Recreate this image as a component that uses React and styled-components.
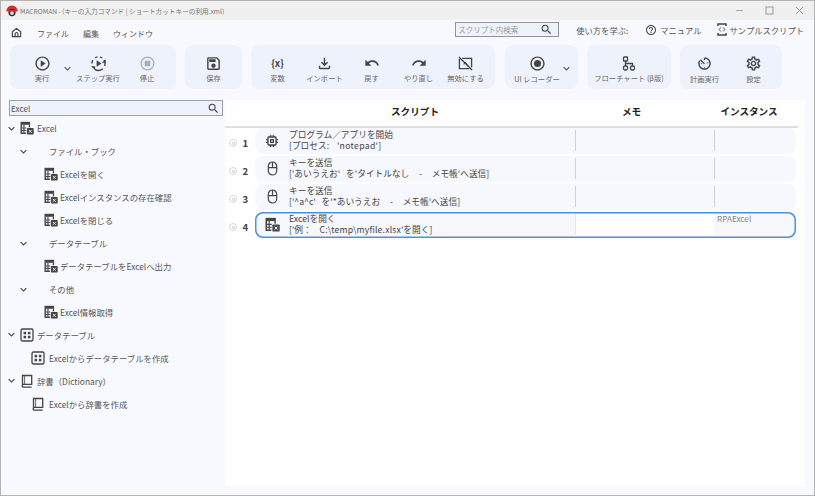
import React from "react"
import styled, { createGlobalStyle } from "styled-components"
import {
  MdOutlinePlayCircle,
  MdOutlineSave,
  MdOutlineFileDownload,
  MdUndo,
  MdRedo,
  MdOutlineRadioButtonChecked,
  MdOutlineSettings,
  MdOutlineMemory,
  MdOutlineHelpOutline,
  MdKeyboardArrowDown,
  MdSearch,
} from "react-icons/md"

const Global = createGlobalStyle`
  html, body { margin: 0; padding: 0; }
  body { font-family: "Noto Sans CJK JP", "Noto Sans", sans-serif; background: #f8f9fe; }
`

const Win = styled.div`
  width: 815px;
  height: 496px;
  box-sizing: border-box;
  border: 1px solid #b4b4b4;
  background: #f8f9fe;
  display: flex;
  flex-direction: column;
  overflow: hidden;
`

const TitleBar = styled.div`
  height: 19px;
  flex: none;
  background: #f0f0f0;
  display: flex;
  align-items: center;
  padding-left: 5px;
`
const Title = styled.span`
  font-size: 6.65px;
  color: #777;
  margin-left: 2px;
  white-space: pre;
`
const WinButtons = styled.div`
  margin-left: auto;
  display: flex;
`
const WinButton = styled.div`
  width: 30px;
  height: 19px;
  display: flex;
  align-items: center;
  justify-content: center;
`

const MenuBar = styled.div`
  height: 25px;
  flex: none;
  display: flex;
  align-items: center;
  padding-left: 10px;
`
const MenuItem = styled.span`
  font-size: 8px;
  color: #555;
  margin-left: ${(p) => p.$left}px;
  padding-top: 1px;
`
const SearchTop = styled.div`
  width: 104px;
  height: 15px;
  box-sizing: border-box;
  margin-left: auto;
  border: 1px solid #8f949c;
  background: #eef2fd;
  display: flex;
  align-items: center;
  justify-content: space-between;
  padding: 0 5px 0 2px;
  font-size: 7.5px;
  color: #9a9a9a;
  position: relative;
  top: -3px;
`
const HelpArea = styled.div`
  display: flex;
  align-items: center;
  margin-left: 17px;
  margin-right: 10px;
  position: relative;
  top: -3px;
  font-size: 8.3px;
  color: #555;
  white-space: nowrap;
`
const HelpLink = styled.span`
  display: flex;
  align-items: center;
  gap: 3px;
  margin-left: ${(p) => p.$left}px;
`

const Toolbar = styled.div`
  height: 44px;
  flex: none;
  display: flex;
  padding-left: 9px;
`
const Group = styled.div`
  width: ${(p) => p.$w}px;
  margin-right: ${(p) => p.$mr}px;
  padding-left: ${(p) => p.$pl || 0}px;
  box-sizing: border-box;
  background: #eef2fd;
  border-radius: 8px;
  display: flex;
`
const Tool = styled.div`
  width: ${(p) => p.$w}px;
  display: flex;
  flex-direction: column;
  align-items: center;
  padding-top: 9px;
  color: #444;
`
const ToolIcon = styled.div`
  width: 18px;
  height: 18px;
  display: flex;
  align-items: center;
  justify-content: center;
`
const VarGlyph = styled.span`
  font-size: 9.5px;
  font-weight: 700;
  white-space: nowrap;
`
const ToolLabel = styled.span`
  font-size: 7.3px;
  line-height: 12px;
  margin-top: ${(p) => (p.$low ? 1 : 0)}px;
  color: #666;
  white-space: nowrap;
`
const Drop = styled.div`
  width: 6px;
  margin-left: ${(p) => p.$ml || 0}px;
  display: flex;
  justify-content: center;
  padding-top: 17px;
  color: #555;
`

const Content = styled.div`
  flex: 1;
  min-height: 0;
  display: flex;
  padding-top: 11px;
  padding-bottom: 9px;
`
const Sidebar = styled.div`
  width: 224px;
  flex: none;
  padding-left: 8px;
  box-sizing: border-box;
`
const TreeSearch = styled.div`
  width: 214px;
  height: 16px;
  box-sizing: border-box;
  border: 1px solid #9a9fa6;
  background: #eef2fd;
  display: flex;
  align-items: center;
  justify-content: space-between;
  padding: 0 2px 0 1px;
  font-size: 8.2px;
  color: #555;
  margin-bottom: 1px;
`
const TreeRow = styled.div`
  height: 22.95px;
  margin-left: -8px;
  padding-left: ${(p) => p.$indent}px;
  display: flex;
  align-items: center;
  color: #4a4a4a;
`
const Caret = styled.div`
  width: 8px;
  margin-right: ${(p) => p.$mr || 0}px;
  display: flex;
  justify-content: center;
  color: #444;
`
const TreeLabel = styled.span`
  font-size: 8.4px;
  color: #555;
  margin-left: ${(p) => p.$left}px;
  white-space: nowrap;
`

const Main = styled.div`
  flex: 1;
  margin-right: 9px;
  background: #fff;
  padding-right: 7px;
`
const HeadRow = styled.div`
  height: 28px;
  box-sizing: border-box;
  border-bottom: 2px solid #dfdfdf;
  display: grid;
  grid-template-columns: 30px 320px 139px 84px;
  align-items: center;
  font-size: 9.6px;
  font-weight: 700;
  color: #222;
`
const HeadCell = styled.div`
  text-align: center;
  padding-right: ${(p) => p.$pr || 0}px;
  padding-bottom: 4px;
  white-space: nowrap;
`
const Rows = styled.div`
  display: flex;
  flex-direction: column;
  gap: 2px;
`
const ScriptRow = styled.div`
  display: flex;
  height: 26px;
`
const Gutter = styled.div`
  width: 30px;
  flex: none;
  display: flex;
  align-items: center;
  padding-left: 4px;
  box-sizing: border-box;
  gap: 5.5px;
  padding-top: 4px;
`
const Mark = styled.span`
  width: 8px;
  height: 8px;
  box-sizing: border-box;
  border: 1px solid #d6d6d6;
  border-radius: 50%;
  display: flex;
  align-items: center;
  justify-content: center;
  &::after {
    content: "";
    width: 3px;
    height: 3px;
    background: #e2e2e2;
  }
`
const Num = styled.span`
  font-size: 9.6px;
  font-weight: 700;
  color: #444;
`
const Card = styled.div`
  width: 541px;
  border-radius: 8px;
  background: #f7f8fd;
  display: flex;
  align-items: stretch;
  box-shadow: ${(p) => (p.$active ? "inset 0 0 0 1.5px #4a90e2" : "none")};
`
const ScriptCell = styled.div`
  width: 320px;
  flex: none;
  display: flex;
  align-items: center;
`
const CmdIcon = styled.div`
  width: 34px;
  flex: none;
  display: flex;
  justify-content: center;
  padding-bottom: 1px;
  color: #444;
`
const CmdText = styled.div`
  font-size: 8.7px;
  line-height: 11px;
  color: #444;
  white-space: pre;
  padding-bottom: 3px;
`
const Wide = styled.span`
  letter-spacing: ${(p) => p.$ls}px;
`
const MemoCell = styled.div`
  width: 139px;
  flex: none;
  margin: 2px 0 3px;
  border-left: 1.5px solid ${(p) => (p.$active ? "#e6e6e6" : "#d0d0d0")};
  box-sizing: border-box;
  background: ${(p) => (p.$active ? "#fff" : "transparent")};
`
const InstanceCell = styled.div`
  flex: 1;
  margin: 2px 0 3px;
  border-left: 1.5px solid ${(p) => (p.$active ? "transparent" : "#d0d0d0")};
  padding-left: 2px;
  font-size: 8.2px;
  line-height: 8.5px;
  color: #888;
`

const Logo = () => (
  <svg width="12" height="12" viewBox="0 0 12 12">
    <path d="M0.5 6a5.5 5.5 0 0 1 11 0z" fill="#d32b2b" />
    <circle cx="6" cy="7.6" r="3.6" fill="#333" />
    <circle cx="6" cy="8" r="1.9" fill="#ddd" />
    <rect x="0.5" y="5" width="11" height="1.4" fill="#d32b2b" />
  </svg>
)

const HomeIcon = () => (
  <svg width="11" height="11" viewBox="0 0 12 12" fill="none" stroke="#444" strokeWidth="1.3">
    <path d="M1.5 5.2 6 1.5l4.5 3.7V10.5H1.5z" strokeLinejoin="round" />
    <path d="M4.5 10.5V7.5a1.5 1.5 0 0 1 3 0v3" />
  </svg>
)

const StepIcon = () => (
  <svg width="17" height="17" viewBox="0 0 18 18" fill="none" stroke="#444" strokeWidth="1.5">
    <path d="M2 9a7 7 0 0 1 1-3.5" />
    <path d="M5.5 3A7 7 0 0 1 8 2" />
    <path d="M10.5 2.2A7 7 0 0 1 13 3.2" />
    <path d="M14.8 5.5A7 7 0 0 1 16 9a7 7 0 0 1-.6 2.5" />
    <path d="M5 15.2A7 7 0 0 0 13.5 14.5" />
    <path d="M7 5.6 12.2 9 7 12.4z" fill="#444" stroke="none" />
    <path d="M1 12h4.4v3.8z" fill="#444" stroke="none" />
    <path d="M16.6 4.4v3.8h-4z" fill="#444" stroke="none" />
  </svg>
)

const StopIcon = () => (
  <svg width="15" height="15" viewBox="0 0 16 16" fill="none">
    <circle cx="8" cy="8" r="6.8" stroke="#a9afb7" strokeWidth="1.3" />
    <rect x="5" y="5" width="6" height="6" rx="0.6" fill="#a9afb7" />
  </svg>
)

const DisableIcon = () => (
  <svg width="15" height="15" viewBox="0 0 16 16" fill="none" stroke="#444" strokeWidth="1.4">
    <path d="M4.5 2.5h10v9.5M12 13.5H1.5V3" />
    <path d="M1 1l14 14" />
    <path d="M6 9l2-2 3 4" strokeWidth="1.1" />
  </svg>
)

const FlowIcon = () => (
  <svg width="14" height="15" viewBox="0 0 14 15" fill="none" stroke="#444" strokeWidth="1.3">
    <rect x="1.5" y="1" width="4" height="4" rx="0.6" />
    <rect x="1.5" y="10" width="4" height="4" rx="1.4" />
    <rect x="8.5" y="10" width="4" height="4" rx="1.4" />
    <path d="M3.5 5v5M3.5 7.5h7V10" />
  </svg>
)

const TimerIcon = () => (
  <svg width="15" height="15" viewBox="0 0 16 16" fill="none" stroke="#444" strokeWidth="1.5">
    <path d="M8 2a6 6 0 1 1-5.2 3" />
    <path d="M8 2.2v2M3.6 4 8 8.4" />
    <path d="M12 6.5 10.8 8M4 8.2h1.2M8 12v1.4" strokeWidth="1" />
  </svg>
)

const SampleIcon = () => (
  <svg width="10" height="13" viewBox="0 0 10 13" fill="none" stroke="#444">
    <path d="M1 3V1h8v2M1 10v2h8v-2" strokeWidth="1.5" />
    <path d="M3.8 4.5 2.2 6.5l1.6 2M6.2 4.5l1.6 2-1.6 2" strokeWidth="0.9" />
  </svg>
)

const ExcelIcon = ({ size = 14 }) => (
  <svg width={size} height={size} viewBox="0 0 14 14">
    <path d="M0.5 0.8h9.6v3H0.5z" fill="#444" />
    <path d="M0.5 3.8h1.4v9.2H0.5zM1.9 11.6h4v1.4h-4z" fill="#444" />
    <path d="M3.4 3.8h1.1v8H3.4z" fill="#444" />
    <path d="M1.9 6.4h4.4v1.1H1.9zM1.9 9h4.4v1.1H1.9z" fill="#444" />
    <path d="M8.8 3.8h1.3v2.6H8.8z" fill="#444" />
    <rect x="6.9" y="7" width="6.8" height="6.6" rx="0.8" fill="#444" />
    <path d="M8.9 8.9l2.8 2.9M11.7 8.9l-2.8 2.9" stroke="#fff" strokeWidth="0.9" />
  </svg>
)

const GridIcon = () => (
  <svg width="14" height="14" viewBox="0 0 14 14">
    <rect x="1" y="1" width="12" height="12" rx="1.4" fill="none" stroke="#444" strokeWidth="1.3" />
    <rect x="3.6" y="3.8" width="2.5" height="2.5" fill="#444" />
    <rect x="7.9" y="3.8" width="2.5" height="2.5" fill="#444" />
    <rect x="3.6" y="7.8" width="2.5" height="2.5" fill="#444" />
    <rect x="7.9" y="7.8" width="2.5" height="2.5" fill="#444" />
  </svg>
)

const BookIcon = () => (
  <svg width="14" height="14" viewBox="0 0 14 14" fill="none" stroke="#444" strokeWidth="1.3">
    <path d="M2.5 11V1.5h9.2v8.8H3.6a1.3 1.3 0 0 0 0 2.9h8.1" />
    <path d="M4.6 1.5v8.8" strokeWidth="0.8" />
  </svg>
)

const MouseIcon = () => (
  <svg width="15" height="15" viewBox="0 0 15 15" fill="none" stroke="#444" strokeWidth="1.2">
    <rect x="3.3" y="1" width="8.4" height="13" rx="4.2" />
    <path d="M3.3 6.6h8.4M7.5 1v5.6" />
  </svg>
)

const Arrow = () => <MdKeyboardArrowDown size={13} style={{ flex: "none" }} />

const Root = ({ icon, label }) => (
  <TreeRow $indent={6}>
    <Caret $mr={5}><Arrow /></Caret>
    {icon}
    <TreeLabel $left={3}>{label}</TreeLabel>
  </TreeRow>
)

const Section = ({ label }) => (
  <TreeRow $indent={18}>
    <Caret><Arrow /></Caret>
    <TreeLabel $left={22}>{label}</TreeLabel>
  </TreeRow>
)

const Leaf = ({ icon, label, indent = 43, left = 2 }) => (
  <TreeRow $indent={indent}>
    {icon}
    <TreeLabel $left={left}>{label}</TreeLabel>
  </TreeRow>
)

const scripts = [
  {
    n: 1,
    icon: <MdOutlineMemory size={16} />,
    a: "プログラム／アプリを開始",
    b: <>[プロセス:    <Wide $ls={0.3}>'notepad'</Wide>]</>,
  },
  {
    n: 2,
    icon: <MouseIcon />,
    a: "キーを送信",
    b: "['あいうえお'   を'タイトルなし     -     メモ帳'へ送信]",
  },
  {
    n: 3,
    icon: <MouseIcon />,
    a: "キーを送信",
    b: "['^a^c'   を'*あいうえお     -     メモ帳'へ送信]",
  },
  {
    n: 4,
    icon: <ExcelIcon size={15} />,
    a: "Excelを開く",
    b: <>['例：    <Wide $ls={0.15}>C:\temp\myfile.xlsx</Wide>'を開く]</>,
    inst: "RPAExcel",
    active: true,
  },
]

export default function App() {
  return (
    <Win>
      <Global />
      <TitleBar>
        <Logo />
        <Title>MACROMAN - (キーの入力コマンド | ショートカットキーの利用.xml)</Title>
        <WinButtons>
          <WinButton>
            <svg width="9" height="9" viewBox="0 0 9 9"><path d="M1 4.5h7" stroke="#aaa" /></svg>
          </WinButton>
          <WinButton>
            <svg width="9" height="9" viewBox="0 0 9 9"><rect x="1" y="1" width="7" height="7" fill="none" stroke="#999" /></svg>
          </WinButton>
          <WinButton>
            <svg width="9" height="9" viewBox="0 0 9 9"><path d="M1 1l7 7M8 1l-7 7" stroke="#999" /></svg>
          </WinButton>
        </WinButtons>
      </TitleBar>

      <MenuBar>
        <HomeIcon />
        <MenuItem $left={15}>ファイル</MenuItem>
        <MenuItem $left={14}>編集</MenuItem>
        <MenuItem $left={14}>ウィンドウ</MenuItem>
        <SearchTop>
          スクリプト内検索
          <MdSearch size={13} color="#444" />
        </SearchTop>
        <HelpArea>
          使い方を学ぶ:
          <HelpLink $left={17}><MdOutlineHelpOutline size={12} color="#444" />マニュアル</HelpLink>
          <HelpLink $left={15}><SampleIcon />サンプルスクリプト</HelpLink>
        </HelpArea>
      </MenuBar>

      <Toolbar>
        <Group $w={166} $mr={9} $pl={10}>
          <Tool $w={44}><ToolIcon><MdOutlinePlayCircle size={17} /></ToolIcon><ToolLabel>実行</ToolLabel></Tool>
          <Drop><Arrow /></Drop>
          <Tool $w={56}><ToolIcon><StepIcon /></ToolIcon><ToolLabel>ステップ実行</ToolLabel></Tool>
          <Tool $w={42}><ToolIcon><StopIcon /></ToolIcon><ToolLabel>停止</ToolLabel></Tool>
        </Group>
        <Group $w={57} $mr={9}>
          <Tool $w={57}><ToolIcon><MdOutlineSave size={17} /></ToolIcon><ToolLabel>保存</ToolLabel></Tool>
        </Group>
        <Group $w={244} $mr={10} $pl={3}>
          <Tool $w={47}><ToolIcon><VarGlyph>{"{x}"}</VarGlyph></ToolIcon><ToolLabel>変数</ToolLabel></Tool>
          <Tool $w={47}><ToolIcon><MdOutlineFileDownload size={17} /></ToolIcon><ToolLabel>インポート</ToolLabel></Tool>
          <Tool $w={47}><ToolIcon><MdUndo size={16} /></ToolIcon><ToolLabel>戻す</ToolLabel></Tool>
          <Tool $w={47}><ToolIcon><MdRedo size={16} /></ToolIcon><ToolLabel>やり直し</ToolLabel></Tool>
          <Tool $w={47}><ToolIcon><DisableIcon /></ToolIcon><ToolLabel>無効にする</ToolLabel></Tool>
        </Group>
        <Group $w={73} $mr={9} $pl={4}>
          <Tool $w={56}><ToolIcon><MdOutlineRadioButtonChecked size={17} /></ToolIcon><ToolLabel $low>UI レコーダー</ToolLabel></Tool>
          <Drop $ml={-2}><Arrow /></Drop>
        </Group>
        <Group $w={84} $mr={9}>
          <Tool $w={84}><ToolIcon><FlowIcon /></ToolIcon><ToolLabel>フローチャート (β版)</ToolLabel></Tool>
        </Group>
        <Group $w={102} $mr={0}>
          <Tool $w={49}><ToolIcon><TimerIcon /></ToolIcon><ToolLabel $low>計画実行</ToolLabel></Tool>
          <Tool $w={49}><ToolIcon><MdOutlineSettings size={17} /></ToolIcon><ToolLabel $low>設定</ToolLabel></Tool>
        </Group>
      </Toolbar>

      <Content>
        <Sidebar>
          <TreeSearch>
            Excel
            <MdSearch size={13} color="#444" />
          </TreeSearch>
          <Root icon={<ExcelIcon />} label="Excel" />
          <Section label="ファイル・ブック" />
          <Leaf icon={<ExcelIcon />} label="Excelを開く" />
          <Leaf icon={<ExcelIcon />} label="Excelインスタンスの存在確認" />
          <Leaf icon={<ExcelIcon />} label="Excelを閉じる" />
          <Section label="データテーブル" />
          <Leaf icon={<ExcelIcon />} label="データテーブルをExcelへ出力" />
          <Section label="その他" />
          <Leaf icon={<ExcelIcon />} label="Excel情報取得" />
          <Root icon={<GridIcon />} label="データテーブル" />
          <Leaf icon={<GridIcon />} label="Excelからデータテーブルを作成" indent={30} left={4} />
          <Root icon={<BookIcon />} label="辞書（Dictionary）" />
          <Leaf icon={<BookIcon />} label="Excelから辞書を作成" indent={30} left={4} />
        </Sidebar>

        <Main>
          <HeadRow>
            <span />
            <HeadCell>スクリプト</HeadCell>
            <HeadCell $pr={26}>メモ</HeadCell>
            <HeadCell $pr={14}>インスタンス</HeadCell>
          </HeadRow>
          <Rows>
            {scripts.map((s) => (
              <ScriptRow key={s.n}>
                <Gutter>
                  <Mark />
                  <Num>{s.n}</Num>
                </Gutter>
                <Card $active={s.active}>
                  <ScriptCell>
                    <CmdIcon>{s.icon}</CmdIcon>
                    <CmdText>{s.a}{"\n"}{s.b}</CmdText>
                  </ScriptCell>
                  <MemoCell $active={s.active} />
                  <InstanceCell $active={s.active}>{s.inst}</InstanceCell>
                </Card>
              </ScriptRow>
            ))}
          </Rows>
        </Main>
      </Content>
    </Win>
  )
}
